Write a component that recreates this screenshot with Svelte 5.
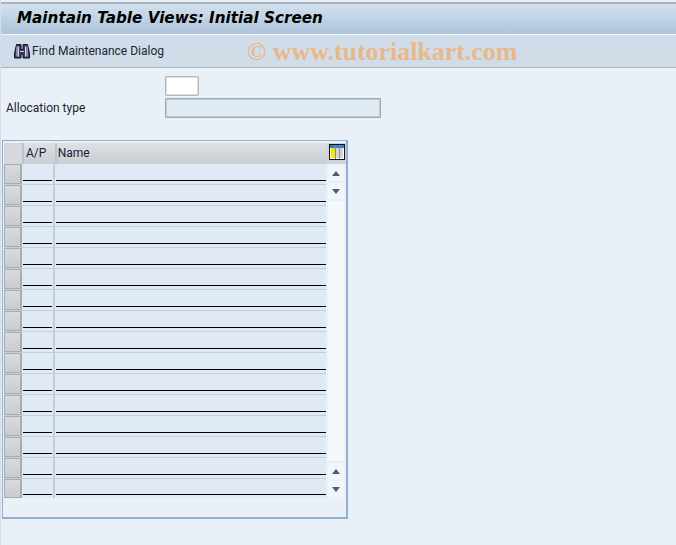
<script>
	const rows = Array.from({ length: 16 }, (_, i) => i);
</script>

<main class="screen">
	<header class="title-bar">
		<h1>Maintain Table Views: Initial Screen</h1>
	</header>

	<div class="toolbar">
		<button class="tool-btn" type="button">
			<svg width="16" height="16" viewBox="0 0 16 16" aria-hidden="true">
				<path d="M2.500 1.500h4.500v5h2v-5h4.500l2 9v4.500H9v-4h-2v4H.5v-4.500z" fill="#3c3c68" stroke="#14142e" stroke-width="1" />
				<path d="M3 3.500v10M4.500 3.500v10M11.500 3.500v10M13 3.500v10" stroke="#d6d6e6" stroke-width="1" />
				<path d="M6 8.500h4" stroke="#c8c8dc" stroke-width="1" />
			</svg>
			<span>Find Maintenance Dialog</span>
		</button>
		<span class="watermark">© www.tutorialkart.com</span>
	</div>

	<section class="form">
		<div class="form-row">
			<span class="label"></span>
			<input class="code" type="text" />
		</div>
		<div class="form-row">
			<span class="label">Allocation type</span>
			<input class="desc" type="text" disabled />
		</div>
	</section>

	<section class="table-box">
		<div class="head">
			<div class="corner"></div>
			<div class="th ap">A/P</div>
			<div class="th name">Name</div>
			<div class="config">
				<svg width="16" height="16" viewBox="0 0 16 16" aria-hidden="true">
					<rect x="0.500" y="0.500" width="15" height="15" fill="#fff" stroke="#111" />
					<rect x="1" y="1" width="14" height="3" fill="#2f7fd0" />
					<rect x="2" y="4" width="4" height="10" fill="#f7e600" />
					<rect x="7" y="4" width="3" height="10" fill="#d4d4d4" />
					<rect x="11" y="4" width="3" height="10" fill="#d4d4d4" />
					<path d="M6.500 1v14M10.500 1v14" stroke="#8a8a8a" stroke-width="1" />
				</svg>
			</div>
		</div>

		<div class="body">
			<div class="rows">
				{#each rows as row (row)}
					<div class="row">
						<div class="selector"></div>
						<div class="cell ap"><span class="field"></span></div>
						<div class="cell name"><span class="field"></span></div>
					</div>
				{/each}
			</div>

			<div class="scrollbar">
				<div class="arrow"><span class="up"></span></div>
				<div class="arrow"><span class="down"></span></div>
				<div class="track"></div>
				<div class="arrow"><span class="up"></span></div>
				<div class="arrow"><span class="down"></span></div>
			</div>
		</div>
	</section>
</main>

<style>
	:global(body) {
		background: #e9f0f7;
	}
	.screen {
		width: 676px;
		height: 545px;
		overflow: hidden;
		background: #e9f0f7;
		font-family: Roboto, "Open Sans", sans-serif;
		font-size: 12px;
		color: #1c2430;
		padding-top: 2px;
		border-left: 1px solid #d6dde6;
		box-sizing: border-box;
	}
	.title-bar {
		height: 32px;
		border-top: 2px solid #a9b4bf;
		background: linear-gradient(#d3e1ee, #adc3da);
		display: flex;
		align-items: center;
		padding-left: 16px;
		padding-bottom: 2px;
		box-sizing: border-box;
	}
	h1 {
		margin: 0;
		font-family: "DejaVu Sans", sans-serif;
		font-size: 15.2px;
		font-weight: 700;
		font-style: italic;
		color: #000;
	}
	.toolbar {
		height: 32px;
		border-top: 1px solid #f2f6fa;
		border-bottom: 1px solid #a9b5c1;
		background: #d0dde8;
		display: flex;
		align-items: center;
		padding-left: 13px;
		position: relative;
	}
	.tool-btn {
		display: flex;
		align-items: center;
		gap: 2px;
		padding: 0 0 1px;
		border: none;
		background: none;
		font: inherit;
		color: inherit;
	}
	.watermark {
		position: absolute;
		left: 246px;
		top: 2px;
		font-family: "Liberation Serif", serif;
		font-size: 25.9px;
		font-weight: 700;
		color: #e8b88a;
		white-space: nowrap;
	}
	.form {
		padding: 8px 0 0 5px;
		display: flex;
		flex-direction: column;
		gap: 2px;
	}
	.form-row {
		display: flex;
		align-items: center;
	}
	.label {
		width: 159px;
	}
	input {
		display: block;
		margin: 0;
		padding: 0;
		box-sizing: border-box;
		border-radius: 1px;
	}
	.code {
		width: 34px;
		height: 20px;
		background: #fff;
		border: 1px solid #b6babd;
		box-shadow: inset 0 0 0 1px #d8dcdf;
	}
	.desc {
		width: 216px;
		height: 20px;
		background: #deeaf4;
		border: 1px solid #a0a6ab;
		box-shadow: inset 0 0 0 1px #c3cbd2;
	}
	.table-box {
		margin: 22px 0 0 1px;
		width: 346px;
		height: 379px;
		box-sizing: border-box;
		border: 1px solid #8fb0ce;
		border-right-width: 2px;
		border-bottom-width: 2px;
		padding: 2px 0 0 1px;
	}
	.head {
		display: flex;
		height: 21px;
	}
	.corner {
		width: 18px;
		background: #d5d9dd;
		border-right: 2px solid #bcc4cb;
	}
	.th {
		background: linear-gradient(#dde0e4, #c9ced3);
		border-right: 2px solid #bcc4cb;
		padding-left: 2px;
		line-height: 21px;
		box-sizing: border-box;
		color: #17233a;
	}
	.th.ap {
		width: 33px;
	}
	.th.name {
		width: 272px;
		border-right: none;
		padding-left: 1px;
	}
	.config {
		width: 19px;
		background: #d0d5d9;
		display: flex;
		justify-content: center;
		padding-top: 1px;
		box-sizing: border-box;
	}
	.body {
		display: flex;
	}
	.row {
		display: flex;
		height: 21px;
		background: #dfeaf4;
		border-bottom: 1px solid #c3ced8;
		box-sizing: border-box;
	}
	.row:last-child {
		height: 19px;
		border-bottom: none;
	}
	.rows {
		width: 322px;
	}
	.selector {
		width: 18px;
		box-sizing: border-box;
		background: linear-gradient(#d8dbde, #c8ccd0);
		border: 1px solid #a8adb2;
		border-right-width: 2px;
	}
	.cell {
		display: flex;
		align-items: flex-end;
		box-sizing: border-box;
		border-right: 2px solid #c3ced8;
		padding-bottom: 3px;
	}
	.cell.ap {
		width: 33px;
		padding-left: 1px;
	}
	.cell.name {
		width: 271px;
		border-right: none;
		padding-left: 1px;
	}
	.field {
		display: block;
		width: 100%;
		height: 1px;
		background: #000;
	}
	.cell.ap .field {
		width: 29px;
	}
	.scrollbar {
		width: 16px;
		margin: 1px 0 0 2px;
		display: flex;
		flex-direction: column;
		gap: 2px;
		height: 332px;
	}
	.arrow {
		height: 16px;
		background: #f0f5f9;
		display: flex;
		align-items: center;
		justify-content: center;
	}
	.track {
		flex: 1;
		background: #f4f8fb;
	}
	.up,
	.down {
		width: 0;
		height: 0;
		border-left: 4.500px solid transparent;
		border-right: 4.500px solid transparent;
	}
	.up {
		border-bottom: 5px solid #4a5d70;
	}
	.down {
		border-top: 5px solid #4a5d70;
	}
</style>
